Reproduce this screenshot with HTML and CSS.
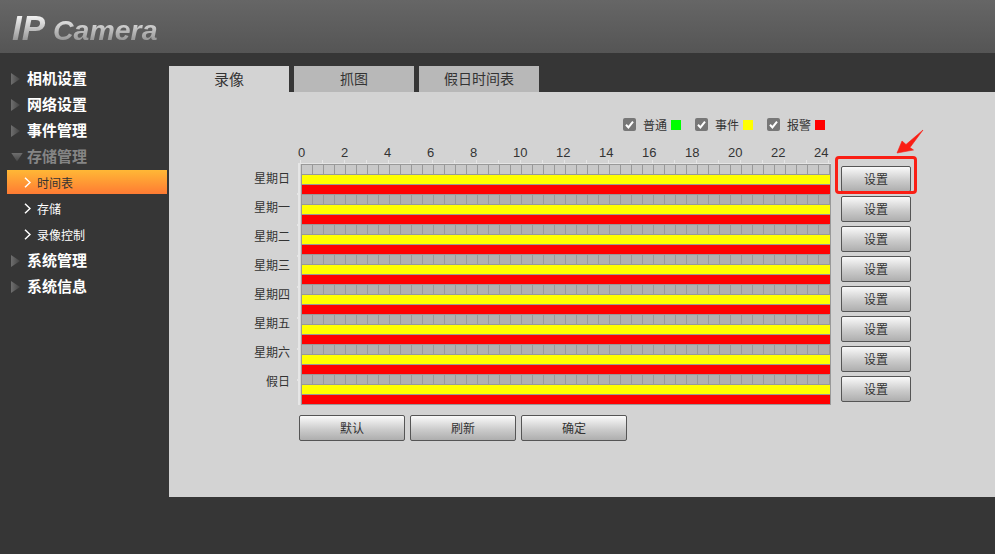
FILE: index.html
```html
<!DOCTYPE html>
<html>
<head>
  <meta charset="UTF-8">
  <title>IP Camera</title>
  <link rel="stylesheet" href="styles.css">
</head>
<body>
  <div class="header">
    <span class="logo"><span class="logo-ip">IP</span> Camera</span>
  </div>
  <div class="main">
    <div class="sidebar">
      <div class="menu"><i class="arrow"></i>相机设置</div>
      <div class="menu"><i class="arrow"></i>网络设置</div>
      <div class="menu"><i class="arrow"></i>事件管理</div>
      <div class="menu open"><i class="arrow"></i>存储管理</div>
      <div class="sub active"><svg class="chev" width="7" height="11" viewBox="0 0 7 11"><path d="M1 .7 6 5.5 1 10.3" /></svg>时间表</div>
      <div class="sub"><svg class="chev" width="7" height="11" viewBox="0 0 7 11"><path d="M1 .7 6 5.5 1 10.3" /></svg>存储</div>
      <div class="sub"><svg class="chev" width="7" height="11" viewBox="0 0 7 11"><path d="M1 .7 6 5.5 1 10.3" /></svg>录像控制</div>
      <div class="menu"><i class="arrow"></i>系统管理</div>
      <div class="menu"><i class="arrow"></i>系统信息</div>
    </div>
    <div class="content">
      <div class="tabs">
        <div class="tab current">录像</div>
        <div class="tab">抓图</div>
        <div class="tab">假日时间表</div>
      </div>
      <div class="panel">
        <div class="legend">
          <span class="legend-item"><svg class="check" width="13" height="13" viewBox="0 0 13 13"><rect width="13" height="13" rx="2" fill="#777" /><path d="M3 6.8 5.4 9.4 10 3.6" fill="none" stroke="#fff" stroke-width="2" /></svg>普通<i class="swatch green"></i></span>
          <span class="legend-item"><svg class="check" width="13" height="13" viewBox="0 0 13 13"><rect width="13" height="13" rx="2" fill="#777" /><path d="M3 6.8 5.4 9.4 10 3.6" fill="none" stroke="#fff" stroke-width="2" /></svg>事件<i class="swatch yellow"></i></span>
          <span class="legend-item"><svg class="check" width="13" height="13" viewBox="0 0 13 13"><rect width="13" height="13" rx="2" fill="#777" /><path d="M3 6.8 5.4 9.4 10 3.6" fill="none" stroke="#fff" stroke-width="2" /></svg>报警<i class="swatch red"></i></span>
        </div>
        <div class="schedule">
          <div class="days">
            <div class="day">星期日</div>
            <div class="day">星期一</div>
            <div class="day">星期二</div>
            <div class="day">星期三</div>
            <div class="day">星期四</div>
            <div class="day">星期五</div>
            <div class="day">星期六</div>
            <div class="day">假日</div>
          </div>
          <div class="chart">
            <div class="axis">
              <span>0</span><span>2</span><span>4</span><span>6</span><span>8</span><span>10</span><span>12</span><span>14</span><span>16</span><span>18</span><span>20</span><span>22</span><span>24</span>
            </div>
            <div class="ruler"></div>
            <div class="grid">
              <div class="row first"><div class="cells"></div><div class="bar yellow"></div><div class="bar red"></div></div>
              <div class="row"><div class="cells"></div><div class="bar yellow"></div><div class="bar red"></div></div>
              <div class="row"><div class="cells"></div><div class="bar yellow"></div><div class="bar red"></div></div>
              <div class="row"><div class="cells"></div><div class="bar yellow"></div><div class="bar red"></div></div>
              <div class="row"><div class="cells"></div><div class="bar yellow"></div><div class="bar red"></div></div>
              <div class="row"><div class="cells"></div><div class="bar yellow"></div><div class="bar red"></div></div>
              <div class="row"><div class="cells"></div><div class="bar yellow"></div><div class="bar red"></div></div>
              <div class="row"><div class="cells"></div><div class="bar yellow"></div><div class="bar red"></div></div>
            </div>
          </div>
          <div class="setups">
            <div class="highlight"></div>
            <svg class="pointer" width="28" height="26" viewBox="0 0 28 26"><path d="M1 25 6 13 10 16.500 27 2 14 19.500 17.500 22Z" fill="#fa1e14" stroke="#fa1e14" stroke-width=".6" /></svg>
            <button class="btn setup">设置</button>
            <button class="btn setup">设置</button>
            <button class="btn setup">设置</button>
            <button class="btn setup">设置</button>
            <button class="btn setup">设置</button>
            <button class="btn setup">设置</button>
            <button class="btn setup">设置</button>
            <button class="btn setup">设置</button>
          </div>
        </div>
        <div class="actions">
          <button class="btn action">默认</button>
          <button class="btn action">刷新</button>
          <button class="btn action">确定</button>
        </div>
      </div>
    </div>
  </div>
</body>
</html>
```

FILE: styles.css
```css
* {
  box-sizing: border-box;
}
body {
  margin: 0;
  height: 554px;
  overflow: hidden;
  background: #363636;
  color: #333;
  font-family: "Liberation Sans", "Noto Sans CJK SC", sans-serif;
  font-size: 12px;
}

/* header */
.header {
  height: 53px;
  padding: 8px 0 0 12px;
  background: linear-gradient(#666, #555);
}
.logo {
  display: inline-block;
  font-size: 28.5px;
  line-height: 40px;
  font-weight: bold;
  font-style: italic;
  background: linear-gradient(#f0f0f0 20%, #9a9a9a 75%, #c8c8c8);
  -webkit-background-clip: text;
  background-clip: text;
  color: transparent;
}
.logo-ip {
  font-size: 35px;
}

/* left menu */
.main {
  display: flex;
}
.sidebar {
  width: 169px;
  padding-top: 13px;
}
.menu {
  display: flex;
  align-items: center;
  height: 26px;
  padding: 0 0 4px 11px;
  color: #fff;
  font-size: 15px;
  font-weight: bold;
}
.arrow {
  width: 9px;
  height: 12px;
  margin: 4px 7px 0 0;
  background: linear-gradient(to right, #6e6e6e, #444);
  clip-path: polygon(0 0, 100% 50%, 0 100%);
}
.menu.open {
  color: #858585;
}
.menu.open .arrow {
  width: 12px;
  height: 9px;
  margin-right: 4px;
  background: linear-gradient(#6e6e6e, #444);
  clip-path: polygon(0 0, 100% 0, 50% 100%);
}
.sub {
  display: flex;
  align-items: center;
  height: 24px;
  margin: 0 2px 2px 7px;
  padding: 1px 0 0 17px;
  color: #fff;
}
.sub.active {
  background: linear-gradient(#ffb836, #ff7b33);
  color: #333;
}
.chev {
  margin-right: 6px;
  fill: none;
  stroke: #fff;
  stroke-width: 1.5;
}

/* tabs and panel */
.content {
  flex: 1;
  padding-top: 13px;
}
.tabs {
  display: flex;
  gap: 5px;
}
.tab {
  width: 120px;
  height: 26px;
  background: #b8b8b8;
  font-size: 14px;
  line-height: 26px;
  text-align: center;
}
.tab.current {
  background: #d3d3d3;
  font-size: 15px;
  line-height: 27px;
}
.panel {
  height: 405px;
  padding-top: 26px;
  background: #d3d3d3;
}

/* legend */
.legend {
  display: flex;
  justify-content: flex-end;
  gap: 14px;
  height: 13px;
  padding-right: 170px;
}
.legend-item {
  display: flex;
  align-items: center;
  width: 58px;
}
.check {
  flex: none;
  margin-right: 7px;
}
.swatch {
  width: 10px;
  height: 10px;
  margin-left: 4px;
}
.green {
  background: #00ff00;
}
.yellow {
  background: #ffff00;
}
.red {
  background: #ff0000;
}

/* schedule */
.schedule {
  display: flex;
  margin-top: 15px;
}
.days {
  width: 121px;
  padding-top: 19px;
}
.day {
  height: 29px;
  line-height: 29px;
  text-align: right;
}
.chart {
  width: 534px;
  margin-left: 7px;
}
.axis {
  display: flex;
  height: 14px;
  padding-left: 1px;
  font-size: 13px;
  line-height: 14px;
}
.axis span {
  flex: none;
  width: 43px;
}
.ruler {
  height: 4px;
  margin-left: 1px;
  border-bottom: 1px solid #e6e6e6;
  background: repeating-linear-gradient(to right, transparent 0 2px, #e6e6e6 2px 3px, transparent 3px 22px);
}
.grid {
  width: 534px;
  height: 241px;
  padding-left: 4px;
  background:
    linear-gradient(#e6e6e6, #e6e6e6) no-repeat 1px 0 / 2px 100%,
    repeating-linear-gradient(to bottom, transparent 0 29px, #e6e6e6 29px 31px) no-repeat 0 0 / 1px 100%;
}
.row {
  width: 530px;
  height: 30px;
  padding: 1px 1px 0;
  background: #999;
}
.grid .row:last-child {
  height: 31px;
}
.cells {
  height: 9px;
  margin-bottom: 1px;
  background: repeating-linear-gradient(to right, #b0b0b0 0 10px, #999 10px 11px);
}
.first .cells {
  background: repeating-linear-gradient(to right, #c9c9c9 0 10px, #999 10px 11px);
}
.bar {
  height: 9px;
  margin-bottom: 1px;
}
.row .bar:last-child {
  margin-bottom: 0;
}

/* buttons */
.btn {
  display: block;
  height: 26px;
  padding: 0 0 2px;
  border: 1px solid #555;
  border-radius: 2px;
  background: linear-gradient(#fafafa, #ccc 55%, #aeaeae);
  color: #333;
  font-family: inherit;
  font-size: 12px;
}
.setups {
  position: relative;
  margin-left: 10px;
  padding-top: 20px;
}
.setup {
  width: 70px;
  margin-bottom: 4px;
}
.highlight {
  position: absolute;
  top: 10px;
  left: -6px;
  width: 82px;
  height: 38px;
  border: 3px solid #fa1e14;
  border-radius: 4px;
}
.pointer {
  position: absolute;
  top: -18px;
  left: 55px;
}
.actions {
  display: flex;
  gap: 5px;
  margin: 9px 0 0 130px;
}
.action {
  width: 106px;
}
```
